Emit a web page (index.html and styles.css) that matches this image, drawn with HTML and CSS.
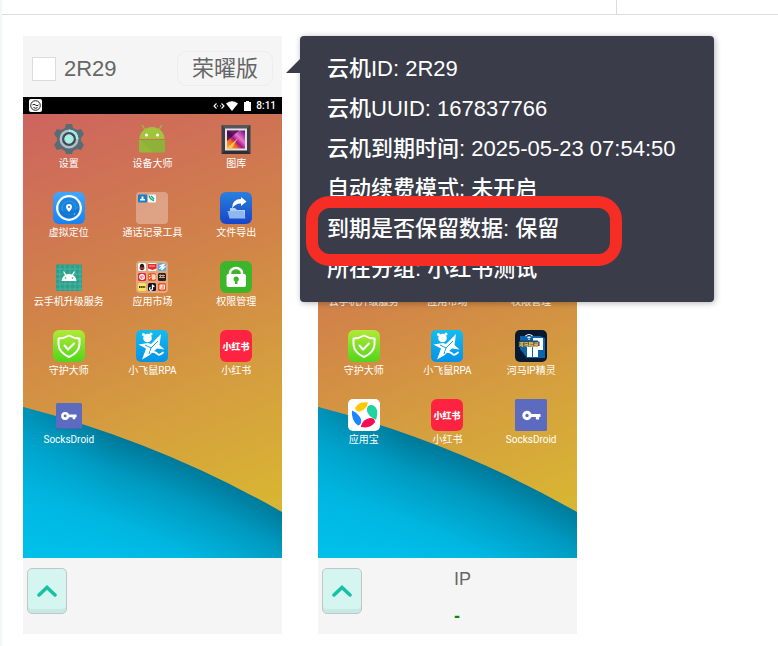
FILE: index.html
```html
<!DOCTYPE html>
<html lang="zh-CN">
<head>
<meta charset="utf-8">
<title>云机</title>
<link rel="stylesheet" href="styles.css">
</head>
<body>
<svg class="defs" aria-hidden="true">
  <defs>
    <linearGradient id="sky" gradientUnits="userSpaceOnUse" x1="20" y1="0" x2="190" y2="430">
      <stop offset="0" stop-color="#cd6260"/><stop offset=".45" stop-color="#d18448"/><stop offset=".75" stop-color="#d5a03e"/><stop offset="1" stop-color="#d8b532"/>
    </linearGradient>
    <radialGradient id="sea" gradientUnits="userSpaceOnUse" cx="-245" cy="1331" r="1050">
      <stop offset=".87" stop-color="#00c3ec"/><stop offset=".92" stop-color="#00b6e0"/><stop offset=".965" stop-color="#0099bf"/><stop offset="1" stop-color="#007696"/>
    </radialGradient>
    <linearGradient id="seaLight" x1="0" y1="0" x2="1" y2="0">
      <stop offset="0" stop-color="#00b8e4" stop-opacity=".4"/><stop offset=".35" stop-color="#00b8e4" stop-opacity="0"/>
    </linearGradient>
    <linearGradient id="blueA" x1="0" y1="0" x2="0" y2="1"><stop offset="0" stop-color="#43a5fb"/><stop offset="1" stop-color="#1583f2"/></linearGradient>
    <linearGradient id="blueB" x1="0" y1="0" x2="0" y2="1"><stop offset="0" stop-color="#2a80dd"/><stop offset="1" stop-color="#1745c9"/></linearGradient>
    <linearGradient id="lime" x1="0" y1="0" x2="0" y2="1"><stop offset="0" stop-color="#b2e936"/><stop offset="1" stop-color="#51d51b"/></linearGradient>
    <linearGradient id="cyan" x1="0" y1="0" x2="0" y2="1"><stop offset="0" stop-color="#15bced"/><stop offset="1" stop-color="#0692e8"/></linearGradient>
    <linearGradient id="photo" x1="0" y1="1" x2="1" y2="0"><stop offset="0" stop-color="#ffb21c"/><stop offset=".3" stop-color="#f16a25"/><stop offset=".45" stop-color="#a31583"/><stop offset=".65" stop-color="#ed73d0"/><stop offset="1" stop-color="#5b0e70"/></linearGradient>

    <symbol id="wallpaper" viewBox="0 0 259 461" preserveAspectRatio="none">
      <path fill="url(#sky)" d="M0 0h259v461H0z"/>
      <path fill="url(#sea)" d="M0 310A1050 1050 0 0 1 259 415V461H0z"/>
      <path fill="url(#seaLight)" d="M0 310A1050 1050 0 0 1 259 415V461H0z"/>
    </symbol>

    <symbol id="gear" viewBox="0 0 32 32">
      <path fill="#596b74" d="M13 1h6l1 4 4 2 4-1 3 5-3 4v3l3 4-3 5-4-1-4 2-1 3h-6l-1-3-4-2-4 1-3-5 3-4v-3l-3-4 3-5 4 1 4-2z"/>
      <circle cx="16" cy="16" r="9.5" fill="#b3bfc5"/><path fill="#9ef0e2" d="M16 6.500a9.500 9.500 0 0 1 9.500 9.500H16z"/>
      <circle cx="16" cy="16" r="7" fill="#3b505b"/><circle cx="16" cy="16" r="4.200" fill="#9ef3e4" stroke="#d4dee0" stroke-width="1"/>
    </symbol>
    <symbol id="robot" viewBox="0 0 32 32">
      <path stroke="#98bf3b" stroke-width="1.300" d="M6 2l4 6M26 2l-4 6"/>
      <path fill="#a0c53c" d="M3.500 16a12.500 12 0 0 1 25 0z"/><path fill="#93b83a" d="M3 17h26v11q0 1.500-1.500 1.500h-23Q3 29.500 3 28z"/>
      <path fill="#83a735" d="M4 17l13 12.500h10.500q1.500 0 1.500-1.500V17z" opacity=".3"/>
      <circle cx="10.500" cy="12" r="1.500" fill="#fff"/><circle cx="21.500" cy="12" r="1.500" fill="#fff"/>
    </symbol>
    <symbol id="gallery" viewBox="0 0 32 32">
      <path fill="#3e4048" d="M1.500 2h29v29h-29z"/><path fill="#55565c" d="M1.500 2h29l-4 4H5.500z"/><path fill="#2e2f36" d="M1.500 31h29l-4-4H5.500z"/>
      <path fill="#e4e1e4" d="M5 5.500h22v22H5z"/><path fill="url(#photo)" d="M7 7.500h18v18H7z"/><path fill="#ffd553" d="M7 25l11-10-6 10z" opacity=".8"/><path fill="#31063f" d="M7 7.500h12L7 18z" opacity=".75"/>
    </symbol>
    <symbol id="locate" viewBox="0 0 32 32">
      <rect width="32" height="32" rx="6" fill="url(#blueA)"/><circle cx="16" cy="16" r="11.800" fill="#1683e0" stroke="#fff" stroke-width="2.200"/>
      <circle cx="16" cy="16" r="7" fill="none" stroke="#3c97e6"/><path fill="#0c68c4" d="M6 18q10 4 20-2-1 9-10 10-8-1-10-8z" opacity=".5"/>
      <path fill="#fff" d="M16 20q-3-3-3-5a3 3 0 0 1 6 0q0 2-3 5z"/><circle cx="16" cy="15" r="1" fill="#1683e0"/><circle cx="21.500" cy="22" r=".8" fill="#5de1ff"/>
    </symbol>
    <symbol id="folder" viewBox="0 0 32 32">
      <rect width="32" height="32" rx="4" fill="#fff" fill-opacity=".3"/>
      <rect x="2" y="2.500" width="9" height="8" rx="1" fill="#1681ca"/><path fill="#fff" d="M4 8.500h5V7H7.500V4.500h-2V7H4z"/>
      <rect x="12" y="2.500" width="8" height="8" rx="1" fill="#eefcf7"/><path fill="none" stroke="#16a782" stroke-width="1.300" d="M13 3.500q1 4 5 5M15 4l3 3"/>
    </symbol>
    <symbol id="export" viewBox="0 0 32 32">
      <rect width="32" height="32" rx="6" fill="url(#blueB)"/>
      <path fill="#b5cff5" d="M10 16h5l2 2h8v8H10z"/><path fill="#8fb7f0" d="M7.500 19h16l2 7.500H9.500z"/>
      <path fill="#fff" d="M12 16.500q0-9.500 9-9.500V5l5.500 4.500L21 14v-2.500q-5-.5-9 5z"/>
    </symbol>
    <symbol id="service" viewBox="0 0 32 32">
      <rect x="3" y="3.500" width="26" height="26.500" rx="1" fill="#2ba08c"/>
      <path stroke="#5cbcab" stroke-width=".6" d="M7 4v26M12 4v26M17 4v26M22 4v26M27 4v26M3 8h26M3 13h26M3 18h26M3 23h26M3 28h26"/>
      <path fill="#fff" d="M8.500 20a7.500 7 0 0 1 15 0z"/><path stroke="#fff" stroke-width="1.200" d="M10.500 10.500l2.500 4M21.500 10.500l-2.500 4"/><circle cx="12.500" cy="17" r=".8" fill="#2ba08c"/><circle cx="19.500" cy="17" r=".8" fill="#2ba08c"/>
    </symbol>
    <symbol id="market" viewBox="0 0 32 32">
      <rect width="32" height="32" rx="4" fill="#fff" fill-opacity=".3"/>
      <rect x="2" y="2" width="8" height="8" rx="1.500" fill="#fff"/><ellipse cx="6" cy="6" rx="2.200" ry="3.200" fill="#222"/><path fill="#e83b25" d="M3.500 6.500h5v1.200h-5z"/>
      <rect x="12" y="2" width="8.500" height="8" rx="1.500" fill="#fff"/><path fill="#e32d31" d="M12 3h8.500v4.500l-4 1.500-4.500-1.500z"/><path stroke="#ffb0ac" d="M13 5h6"/>
      <rect x="22" y="2" width="8" height="8" rx="1.500" fill="#58acea"/><path fill="none" stroke="#fff" stroke-width="1.300" d="M23.500 5l5-2-4 4 4-1-3 3"/>
      <rect x="2" y="12" width="8" height="8" rx="1.500" fill="#e62239"/><circle cx="6" cy="16" r="2.300" fill="none" stroke="#fff" stroke-width="1.300"/><path fill="none" stroke="#fff" d="M6 13v4h3"/>
      <rect x="12" y="12" width="8" height="8" rx="1.500" fill="#f35a24"/><path fill="none" stroke="#fff" d="M13 14l1 1M13 18l1.500-2M15.500 14H19v4h-3M15.500 16H19M17 14v4"/>
      <rect x="22" y="12" width="8" height="8" rx="1.500" fill="#2d211d"/><path stroke="#d3a58e" d="M23 14.500h6M23 16.500h6M24.500 13.500v3M27 13.500v3"/>
      <rect x="2" y="22" width="8" height="8" rx="1.500" fill="#f9e35a"/><path stroke="#433b18" stroke-width="2" stroke-dasharray="1.500 .6" d="M3 26h6.500"/>
      <rect x="12" y="22" width="8" height="8" rx="1.500" fill="#15131e"/><path fill="none" stroke="#fff" stroke-width="1.300" d="M16.500 23.500v4a1.500 1.500 0 1 1-2-1.200M16.500 24q.5 1.500 2 1.500"/>
      <rect x="22" y="22" width="8" height="8" rx="1.500" fill="#f24e28"/><path fill="none" stroke="#fff" stroke-width=".9" d="M24 24h4.500v4H24zM24 26h4M26 24l-2 4"/>
    </symbol>
    <symbol id="lock" viewBox="0 0 32 32">
      <rect width="32" height="32" rx="6" fill="#3db52b"/><path fill="none" stroke="#fff" stroke-width="2.500" d="M10 14v-2a6 5 0 0 1 12 0v2"/><rect x="6.500" y="13" width="19.500" height="13" rx="2" fill="#fff"/>
      <circle cx="16.200" cy="18" r="2.600" fill="#3db52b"/><path fill="#3db52b" d="M15 18h2.400v5H15z"/>
    </symbol>
    <symbol id="shield" viewBox="0 0 32 32">
      <rect width="32" height="32" rx="6" fill="url(#lime)"/><path fill="none" stroke="#fff" stroke-width="2" stroke-linejoin="round" d="M16 5.500q5 3 10.500 3v6q-.5 8-10.500 12.500Q6 22.500 5.500 14.500v-6q5.500 0 10.500-3z"/><path fill="none" stroke="#fff" stroke-width="2" d="M11 15l4 4.500 6.500-6.500"/>
    </symbol>
    <symbol id="squirrel" viewBox="0 0 32 32">
      <rect width="32" height="32" rx="5" fill="url(#cyan)"/>
      <circle cx="11.500" cy="8" r="4.300" fill="#fff"/><circle cx="7.500" cy="4.500" r="1.500" fill="#fff"/><circle cx="15" cy="4" r="1.500" fill="#fff"/>
      <path fill="#fff" d="M2.500 14.500L12 13l3 1L25 4l-1.500 11 5 4.500-7.500-1-8 7-7 4 3-8 1-3z"/>
      <path fill="none" stroke="#13a6e9" stroke-width="1" d="M9 15l6 3 7-7M13 24l2-6"/><path fill="none" stroke="#fff" stroke-width="1.800" stroke-linecap="round" d="M15 21.500q5 .5 6.500 2.500t5.500-1.500"/>
    </symbol>
    <symbol id="redbook" viewBox="0 0 32 32">
      <rect width="32" height="32" rx="6" fill="#fe2441"/><text class="logo-text" x="16" y="19.500">小红书</text>
    </symbol>
    <symbol id="key-mark" viewBox="0 0 32 32">
      <path fill="none" stroke="#fff" stroke-width="3.200" d="M15 16.500h10.500M22.500 16.500v4"/><circle cx="12" cy="16.500" r="3.200" fill="none" stroke="#fff" stroke-width="3"/>
    </symbol>
    <symbol id="socks-small" viewBox="0 0 32 32">
      <rect x="3" y="4.500" width="26" height="26" rx="1.500" fill="#48549f" opacity=".5"/><rect x="3" y="4" width="26" height="25.500" rx="1.500" fill="#5c6bc0"/><use href="#key-mark" x="2" y="3" width="27" height="27"/>
    </symbol>
    <symbol id="socks" viewBox="0 0 32 32"><rect width="32" height="32" rx="1.500" fill="#5c6bc0"/><use href="#key-mark" width="32" height="32"/></symbol>
    <symbol id="hippo" viewBox="0 0 32 32">
      <rect width="32" height="32" rx="5" fill="#071a32"/><path fill="#0d65aa" d="M5 6h20l5 2v20H12l-7-9z"/>
      <path fill="#fff" d="M12 17h5v10h-5zM18 8h10v12h-5v7h-5z"/><path fill="#0b4f91" d="M22 11.500h2.500V16H22z"/>
      <path fill="none" stroke="#fff" stroke-width="1.200" d="M10.500 6q3.500-3 7 0M12.500 7.800q1.500-1.200 3 0"/><circle cx="14" cy="9.200" r=".8" fill="#fff"/>
      <path fill="#24466c" d="M4.500 10.500h18.500v6h-18.500z"/><text class="logo-note" x="13.500" y="15.500">河马精灵</text>
    </symbol>
    <symbol id="yyb" viewBox="0 0 32 32">
      <rect width="32" height="32" rx="5" fill="#fff"/>
      <path fill="#ffc800" d="M7 9q4-7 13-5.500Q19 10 12 12.500 8 13 7 9z"/><path fill="#20d3a0" d="M20 7q6-3 9 4 1 5-1 10-8-4-9-9-.5-3 1-5z"/>
      <path fill="#f70d54" d="M13 27q2-7 9-8 5 0 5 4-4 7-14 5z"/><path fill="#1985ff" d="M4 11.500q7 3 9 9 1 5-3 6-7-5-6-15z"/>
    </symbol>
    <symbol id="chevron" viewBox="0 0 20 12"><path fill="none" stroke="#16c2a3" stroke-width="3.500" stroke-linecap="round" stroke-linejoin="miter" d="M2 10l8-7.500 8 7.500"/></symbol>
  </defs>
</svg>

<header class="topbar"><div class="topbar-end"></div></header>

<main class="devices">
  <article class="card">
    <header class="card-head">
      <label class="pick"><input type="checkbox" class="check">2R29</label>
      <span class="tag">荣曜版</span>
    </header>
    <section class="screen">
      <svg class="wallpaper"><use href="#wallpaper"/></svg>
      <div class="status">
        <svg class="status-app" viewBox="0 0 13 13"><rect width="13" height="13" rx="2" fill="#fff"/><circle cx="6.500" cy="6.500" r="4.800" fill="none" stroke="#222"/><path fill="none" stroke="#222" d="M3.500 6q1.500-1.500 3 0t3 0M4.500 8.500q2 1.500 4 0"/></svg>
        <svg class="status-icons" viewBox="0 0 39 12"><path fill="none" stroke="#fff" stroke-width="1.100" d="M3.500 3.500L1 6l2.500 2.500M8.500 3.500L11 6 8.500 8.500M4 6h1M7 6h1"/><path fill="#fff" d="M13 3.500q6-4.500 12 0L19 11z"/><path fill="#fff" d="M31 2h2V1h3v1h2v9h-7z"/></svg>
        <time>8:11</time>
      </div>
      <ul class="apps">
        <li class="app"><svg><use href="#gear"/></svg>设置</li>
        <li class="app"><svg><use href="#robot"/></svg>设备大师</li>
        <li class="app"><svg><use href="#gallery"/></svg>图库</li>
        <li class="app"><svg><use href="#locate"/></svg>虚拟定位</li>
        <li class="app"><svg><use href="#folder"/></svg>通话记录工具</li>
        <li class="app"><svg><use href="#export"/></svg>文件导出</li>
        <li class="app"><svg><use href="#service"/></svg>云手机升级服务</li>
        <li class="app"><svg><use href="#market"/></svg>应用市场</li>
        <li class="app"><svg><use href="#lock"/></svg>权限管理</li>
        <li class="app"><svg><use href="#shield"/></svg>守护大师</li>
        <li class="app"><svg><use href="#squirrel"/></svg>小飞鼠RPA</li>
        <li class="app"><svg><use href="#redbook"/></svg>小红书</li>
        <li class="app"><svg><use href="#socks-small"/></svg>SocksDroid</li>
      </ul>
    </section>
    <footer class="card-foot">
      <button type="button" class="toggle"><svg><use href="#chevron"/></svg></button>
    </footer>
    <aside class="tip">
      <p>云机ID: 2R29</p>
      <p>云机UUID: 167837766</p>
      <p>云机到期时间: 2025-05-23 07:54:50</p>
      <p>自动续费模式: 未开启</p>
      <p>到期是否保留数据: 保留</p>
      <p>所在分组: 小红书测试</p>
      <div class="marker"></div>
    </aside>
  </article>

  <article class="card">
    <header class="card-head"></header>
    <section class="screen">
      <svg class="wallpaper"><use href="#wallpaper"/></svg>
      <div class="status"></div>
      <ul class="apps apps-lower">
        <li class="app"><svg></svg>云手机升级服务</li>
        <li class="app"><svg></svg>应用市场</li>
        <li class="app"><svg></svg>权限管理</li>
        <li class="app"><svg><use href="#shield"/></svg>守护大师</li>
        <li class="app"><svg><use href="#squirrel"/></svg>小飞鼠RPA</li>
        <li class="app"><svg><use href="#hippo"/></svg>河马IP精灵</li>
        <li class="app"><svg><use href="#yyb"/></svg>应用宝</li>
        <li class="app"><svg><use href="#redbook"/></svg>小红书</li>
        <li class="app"><svg><use href="#socks"/></svg>SocksDroid</li>
      </ul>
    </section>
    <footer class="card-foot">
      <button type="button" class="toggle"><svg><use href="#chevron"/></svg></button>
      <div class="info"><span>IP</span><b class="value">-</b></div>
    </footer>
  </article>
</main>
</body>
</html>
```
FILE: styles.css
```css
* { box-sizing: border-box; }

body {
  margin: 0;
  min-height: 100vh;
  border-left: 2px solid #f2f8f8;
  background: #fff;
  color: #666;
  font-family: "Liberation Sans", "Noto Sans CJK SC", sans-serif;
  font-size: 22px;
}

.defs { position: absolute; width: 0; height: 0; }

.topbar {
  display: flex;
  justify-content: flex-end;
  height: 15px;
  border-bottom: 1px solid #dcdcdc;
}
.topbar-end { width: 162px; border-left: 1px solid #dcdcdc; }

.devices {
  display: grid;
  grid-template-columns: repeat(auto-fill, 259px);
  gap: 36px;
  padding: 21px;
}

.card { position: relative; background: #f5f5f5; }

.card-head {
  display: flex;
  align-items: center;
  justify-content: space-between;
  height: 61px;
  padding: 4px 9px 0;
}
.pick { display: flex; align-items: center; gap: 8px; line-height: 32px; }
.check {
  appearance: none;
  width: 24px;
  height: 24px;
  margin: 0;
  border: 1px solid #dcdcdc;
  background: #fff;
}
.tag {
  padding: 0 14px;
  border: 1px solid #ededed;
  border-radius: 9px;
  line-height: 33px;
}

.screen {
  position: relative;
  height: 461px;
  overflow: hidden;
  color: #fff;
  font-family: Roboto, "Noto Sans CJK SC", sans-serif;
}
.wallpaper { position: absolute; width: 100%; height: 100%; }

.status {
  position: relative;
  display: flex;
  align-items: center;
  gap: 4px;
  height: 17px;
  padding: 0 6px;
  background: #000;
  font-size: 10px;
  font-weight: 500;
  line-height: 17px;
}
.status-app { width: 13px; height: 13px; margin-right: auto; }
.status-icons { width: 39px; height: 12px; }

.apps {
  position: relative;
  display: grid;
  grid-template-columns: repeat(3, 1fr);
  grid-auto-rows: 48px;
  row-gap: 21px;
  margin: 0;
  padding: 9px 4px;
  list-style: none;
}
.apps-lower { padding-top: 147px; }
.app {
  display: flex;
  flex-direction: column;
  align-items: center;
  gap: 2px;
  font-size: 10px;
  line-height: 14px;
  white-space: nowrap;
}
.app svg { flex: none; width: 32px; height: 32px; }

.logo-text, .logo-note {
  fill: #fff;
  font-family: "Noto Sans CJK SC", sans-serif;
  font-size: 9px;
  font-weight: 900;
  text-anchor: middle;
}
.logo-note { fill: #f0c24b; font-size: 5px; }

.card-foot {
  display: flex;
  align-items: flex-start;
  gap: 92px;
  height: 76px;
  padding: 0 4px;
}
.toggle {
  display: flex;
  align-items: center;
  justify-content: center;
  width: 40px;
  height: 46px;
  margin: 10px 0 0;
  padding: 0;
  border: 1px solid #c2c6c5;
  border-radius: 5px;
  background: #d5f5f0;
  box-shadow: inset 0 -4px #c8e8e3;
}
.toggle svg { width: 20px; height: 12px; }

.info {
  display: flex;
  flex-direction: column;
  margin-top: 3px;
  font-size: 18px;
  line-height: 37px;
}
.value { color: #088a08; }

.tip {
  position: absolute;
  top: 0;
  left: calc(100% + 18px);
  z-index: 2;
  padding: 13px 38px 13px 27px;
  border-radius: 4px;
  background: #3a3d49;
  box-shadow: 1px 1px 6px rgba(0, 0, 0, .3);
  color: #fff;
  line-height: 40px;
  white-space: nowrap;
}
.tip::before {
  content: "";
  position: absolute;
  top: 23px;
  left: -14px;
  width: 14px;
  height: 14px;
  background: #3a3d49;
  clip-path: polygon(0 100%, 100% 0, 100% 100%);
}
.tip p { margin: 0; font-weight: 500; }
.marker {
  position: absolute;
  top: 160px;
  left: 6px;
  width: 316px;
  height: 70px;
  border: 12px solid #f52d25;
  border-radius: 24px;
}
```
